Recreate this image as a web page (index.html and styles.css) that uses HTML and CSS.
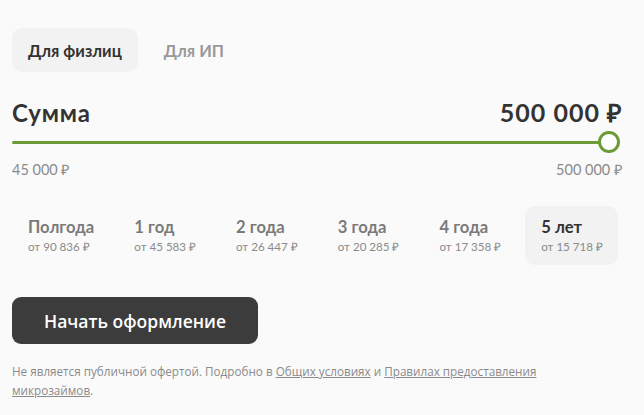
FILE: index.html
```html
<!DOCTYPE html>
<html lang="ru">
<head>
    <meta charset="UTF-8">
    <meta name="viewport" content="width=device-width, initial-scale=1.0">
    <title>Калькулятор займа</title>
    <link rel="stylesheet" href="styles.css">
</head>
<body>

<div class="calc">
    <div class="tabs">
        <button class="tab active">Для физлиц</button>
        <button class="tab">Для ИП</button>
    </div>

    <div class="sum-head">
        <span class="sum-title">Сумма</span>
        <span class="sum-value">500 000 ₽</span>
    </div>

    <div class="slider">
        <div class="slider-track"></div>
        <div class="slider-thumb"></div>
    </div>

    <div class="slider-limits">
        <span>45 000 ₽</span>
        <span>500 000 ₽</span>
    </div>

    <div class="terms">
        <div class="term">
            <div class="term-name">Полгода</div>
            <div class="term-price">от 90 836 ₽</div>
        </div>
        <div class="term">
            <div class="term-name">1 год</div>
            <div class="term-price">от 45 583 ₽</div>
        </div>
        <div class="term">
            <div class="term-name">2 года</div>
            <div class="term-price">от 26 447 ₽</div>
        </div>
        <div class="term">
            <div class="term-name">3 года</div>
            <div class="term-price">от 20 285 ₽</div>
        </div>
        <div class="term">
            <div class="term-name">4 года</div>
            <div class="term-price">от 17 358 ₽</div>
        </div>
        <div class="term active">
            <div class="term-name">5 лет</div>
            <div class="term-price">от 15 718 ₽</div>
        </div>
    </div>

    <button class="start-button">Начать оформление</button>

    <p class="disclaimer">
        Не является публичной офертой. Подробно в <a href="#">Общих условиях</a> и <a href="#">Правилах предоставления микрозаймов</a>.
    </p>
</div>

</body>
</html>
```

FILE: styles.css
```css
body {
    margin: 0;
    background: #fafafa;
    font-family: 'Lato', 'Open Sans', sans-serif;
    color: #333;
}

.calc {
    width: 610px;
    padding: 28px 22px 0 12px;
}

.tabs {
    display: flex;
    gap: 10px;
    margin-bottom: 23px;
}

.tab {
    font-family: 'Lato', sans-serif;
    font-size: 16.4px;
    font-weight: 700;
    color: #999;
    background: none;
    border: none;
    border-radius: 10px;
    height: 44px;
    padding: 0 16px;
    cursor: pointer;
}

.tab.active {
    background: #f2f2f2;
    color: #333;
}

.sum-head {
    display: flex;
    justify-content: space-between;
    align-items: baseline;
}

.sum-title,
.sum-value {
    font-size: 24px;
    font-weight: 700;
    color: #333;
}

.sum-title {
    letter-spacing: 0.8px;
}

.sum-value {
    font-size: 25px;
    letter-spacing: 1px;
    margin-right: -1px;
}

.slider {
    position: relative;
    height: 22px;
    margin-top: 2px;
    margin-right: 2px;
}

.slider-track {
    position: absolute;
    top: 10px;
    left: 0;
    right: 8px;
    height: 3px;
    background: #6b9b37;
    border-radius: 2px;
}

.slider-thumb {
    position: absolute;
    top: 0;
    right: 0;
    width: 16px;
    height: 16px;
    border: 3px solid #6b9b37;
    border-radius: 50%;
    background: #fff;
}

.slider-limits {
    display: flex;
    justify-content: space-between;
    font-size: 14.5px;
    color: #8a8a8a;
    margin-top: 6px;
}

.terms {
    display: flex;
    gap: 8px;
    margin-top: 27px;
}

.term {
    flex-shrink: 0;
    white-space: nowrap;
    height: 59px;
    box-sizing: border-box;
    padding: 11px 16px 0;
    border-radius: 10px;
}

.term.active {
    background: #f2f2f2;
    padding-right: 15px;
}

.term-name {
    font-size: 16.6px;
    font-weight: 700;
    color: #7a7a7a;
}

.term.active .term-name {
    color: #333;
}

.term-price {
    font-size: 11.6px;
    color: #8a8a8a;
    margin-top: 2px;
}

.start-button {
    margin-top: 32px;
    width: 246px;
    height: 47px;
    background: #3c3c3c;
    color: #fff;
    border: none;
    border-radius: 9px;
    font-family: 'Open Sans', sans-serif;
    font-size: 17.5px;
    font-weight: 600;
    cursor: pointer;
}

.disclaimer {
    font-family: 'Open Sans', sans-serif;
    font-size: 11.7px;
    line-height: 19px;
    color: #8a8a8a;
    margin: 18px 0 0;
    width: 540px;
}

.disclaimer a {
    color: #8a8a8a;
}
```
